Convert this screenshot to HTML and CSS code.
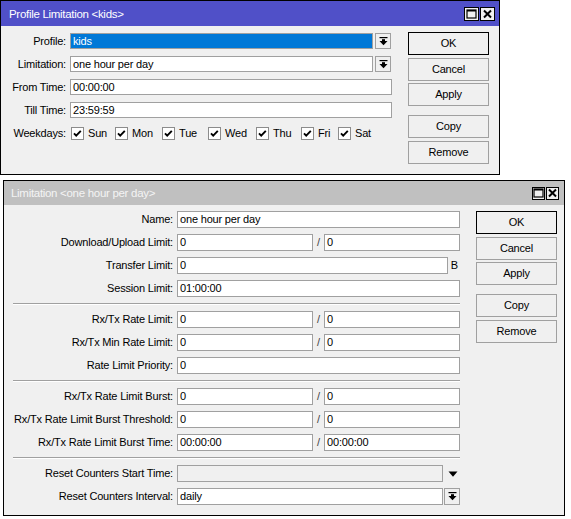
FILE: index.html
```html
<!DOCTYPE html>
<html>
<head>
<meta charset="utf-8">
<link rel="stylesheet" href="styles.css">
</head>
<body>
<div class="win win1">
  <div class="title active">
    <span class="title-text">Profile Limitation &lt;kids&gt;</span>
    <div class="tbtns">
      <span class="tbtn"><svg width="11" height="10" viewBox="0 0 11 10"><rect x="1" y="1" width="9" height="8" fill="none" stroke="#000" stroke-width="1.2"/><rect x="1" y="1" width="9" height="1.5" fill="#000"/></svg></span>
      <span class="tbtn"><svg width="11" height="10" viewBox="0 0 11 10"><path d="M2 1.5L9 8.5M9 1.5L2 8.5" stroke="#000" stroke-width="2"/></svg></span>
    </div>
  </div>
  <div class="body">
    <div class="form form1">
      <div class="lbl">Profile:</div>
      <div class="combo"><div class="field sel">kids</div><span class="dd"><svg width="9" height="9" viewBox="0 0 9 9"><rect x="0.5" y="0" width="8" height="1.2"/><rect x="3" y="2.2" width="3" height="2"/><path d="M0.5 4h8L4.5 8.3z"/></svg></span></div>
      <div class="lbl">Limitation:</div>
      <div class="combo"><div class="field">one hour per day</div><span class="dd"><svg width="9" height="9" viewBox="0 0 9 9"><rect x="0.5" y="0" width="8" height="1.2"/><rect x="3" y="2.2" width="3" height="2"/><path d="M0.5 4h8L4.5 8.3z"/></svg></span></div>
      <div class="lbl">From Time:</div>
      <div class="field">00:00:00</div>
      <div class="lbl">Till Time:</div>
      <div class="field">23:59:59</div>
      <div class="lbl">Weekdays:</div>
      <div class="days">
        <span class="day"><svg class="cb" width="13" height="13" viewBox="0 0 13 13"><rect x="0.5" y="0.5" width="12" height="12" fill="#fff" stroke="#8c8c8c"/><path d="M3 6.3L5.2 8.6L9.8 3.8" fill="none" stroke="#000" stroke-width="1.9"/></svg>Sun</span>
        <span class="day"><svg class="cb" width="13" height="13" viewBox="0 0 13 13"><rect x="0.5" y="0.5" width="12" height="12" fill="#fff" stroke="#8c8c8c"/><path d="M3 6.3L5.2 8.6L9.8 3.8" fill="none" stroke="#000" stroke-width="1.9"/></svg>Mon</span>
        <span class="day"><svg class="cb" width="13" height="13" viewBox="0 0 13 13"><rect x="0.5" y="0.5" width="12" height="12" fill="#fff" stroke="#8c8c8c"/><path d="M3 6.3L5.2 8.6L9.8 3.8" fill="none" stroke="#000" stroke-width="1.9"/></svg>Tue</span>
        <span class="day"><svg class="cb" width="13" height="13" viewBox="0 0 13 13"><rect x="0.5" y="0.5" width="12" height="12" fill="#fff" stroke="#8c8c8c"/><path d="M3 6.3L5.2 8.6L9.8 3.8" fill="none" stroke="#000" stroke-width="1.9"/></svg>Wed</span>
        <span class="day"><svg class="cb" width="13" height="13" viewBox="0 0 13 13"><rect x="0.5" y="0.5" width="12" height="12" fill="#fff" stroke="#8c8c8c"/><path d="M3 6.3L5.2 8.6L9.8 3.8" fill="none" stroke="#000" stroke-width="1.9"/></svg>Thu</span>
        <span class="day"><svg class="cb" width="13" height="13" viewBox="0 0 13 13"><rect x="0.5" y="0.5" width="12" height="12" fill="#fff" stroke="#8c8c8c"/><path d="M3 6.3L5.2 8.6L9.8 3.8" fill="none" stroke="#000" stroke-width="1.9"/></svg>Fri</span>
        <span class="day"><svg class="cb" width="13" height="13" viewBox="0 0 13 13"><rect x="0.5" y="0.5" width="12" height="12" fill="#fff" stroke="#8c8c8c"/><path d="M3 6.3L5.2 8.6L9.8 3.8" fill="none" stroke="#000" stroke-width="1.9"/></svg>Sat</span>
      </div>
    </div>
    <div class="buttons">
      <div class="btn default">OK</div>
      <div class="btn">Cancel</div>
      <div class="btn">Apply</div>
      <div class="btn sep-before">Copy</div>
      <div class="btn">Remove</div>
    </div>
  </div>
</div>

<div class="win win2">
  <div class="title inactive">
    <span class="title-text">Limitation &lt;one hour per day&gt;</span>
    <div class="tbtns">
      <span class="tbtn"><svg width="11" height="10" viewBox="0 0 11 10"><rect x="1" y="1" width="9" height="8" fill="none" stroke="#000" stroke-width="1.2"/><rect x="1" y="1" width="9" height="1.5" fill="#000"/></svg></span>
      <span class="tbtn"><svg width="11" height="10" viewBox="0 0 11 10"><path d="M2 1.5L9 8.5M9 1.5L2 8.5" stroke="#000" stroke-width="2"/></svg></span>
    </div>
  </div>
  <div class="body body2">
    <div class="form form2">
      <div class="lbl">Name:</div>
      <div class="field">one hour per day</div>
      <div class="lbl">Download/Upload Limit:</div>
      <div class="pair"><div class="field">0</div><span class="slash">/</span><div class="field">0</div></div>
      <div class="lbl">Transfer Limit:</div>
      <div class="unitrow"><div class="field">0</div><span class="unit">B</span></div>
      <div class="lbl">Session Limit:</div>
      <div class="field">01:00:00</div>
      <div class="hsep"></div>
      <div class="lbl">Rx/Tx Rate Limit:</div>
      <div class="pair"><div class="field">0</div><span class="slash">/</span><div class="field">0</div></div>
      <div class="lbl">Rx/Tx Min Rate Limit:</div>
      <div class="pair"><div class="field">0</div><span class="slash">/</span><div class="field">0</div></div>
      <div class="lbl">Rate Limit Priority:</div>
      <div class="field">0</div>
      <div class="hsep"></div>
      <div class="lbl">Rx/Tx Rate Limit Burst:</div>
      <div class="pair"><div class="field">0</div><span class="slash">/</span><div class="field">0</div></div>
      <div class="lbl">Rx/Tx Rate Limit Burst Threshold:</div>
      <div class="pair"><div class="field">0</div><span class="slash">/</span><div class="field">0</div></div>
      <div class="lbl">Rx/Tx Rate Limit Burst Time:</div>
      <div class="pair"><div class="field">00:00:00</div><span class="slash">/</span><div class="field">00:00:00</div></div>
      <div class="hsep"></div>
      <div class="lbl">Reset Counters Start Time:</div>
      <div class="combo2"><div class="field disabled"></div><span class="arrow"><svg width="10" height="6" viewBox="0 0 10 6"><path d="M0.5 0.5h9L5 5.8z"/></svg></span></div>
      <div class="lbl">Reset Counters Interval:</div>
      <div class="combo2"><div class="field">daily</div><span class="dd"><svg width="9" height="9" viewBox="0 0 9 9"><rect x="0.5" y="0" width="8" height="1.2"/><rect x="3" y="2.2" width="3" height="2"/><path d="M0.5 4h8L4.5 8.3z"/></svg></span></div>
    </div>
    <div class="buttons">
      <div class="btn default">OK</div>
      <div class="btn">Cancel</div>
      <div class="btn">Apply</div>
      <div class="btn sep-before">Copy</div>
      <div class="btn">Remove</div>
    </div>
  </div>
</div>
</body>
</html>
```

FILE: styles.css
```css
html, body {
  margin: 0;
  padding: 0;
  background: #ffffff;
}
body {
  font-family: "Liberation Sans", Arial, sans-serif;
  font-size: 11px;
  letter-spacing: -0.18px;
  color: #000;
}
.win {
  box-sizing: border-box;
  border: 1px solid #000;
  background: #f0f0f0;
}
.win1 {
  width: 500px;
  height: 175px;
}
.win2 {
  width: 562px;
  margin: 5px 0 0 3px;
}
.title {
  display: flex;
  align-items: center;
  justify-content: space-between;
  color: #fff;
  font-size: 11.5px;
  letter-spacing: -0.3px;
}
.title.active {
  height: 25px;
  background: #5050c8;
  padding: 0 4px 0 8px;
}
.title.inactive {
  height: 24px;
  background: #c0c0c0;
  color: #f4f4f4;
  padding: 0 5px 0 7px;
}
.tbtns {
  display: flex;
  gap: 1px;
}
.tbtn {
  box-sizing: border-box;
  width: 15px;
  height: 14px;
  border: 1px solid #000;
  background: #f0f0f0;
  display: flex;
  align-items: center;
  justify-content: center;
}
.title.inactive .tbtn {
  width: 13px;
  height: 13px;
}
.body {
  display: flex;
  align-items: flex-start;
  gap: 16px;
  padding: 6px 9px 0 7px;
}
.body2 {
  padding: 6px 7px 10px 9px;
}
.form {
  display: grid;
  column-gap: 4px;
  align-items: center;
}
.form1 {
  grid-template-columns: 58px 322px;
  grid-auto-rows: 16px;
  row-gap: 7px;
  margin-top: 1px;
}
.form2 {
  grid-template-columns: 160px 283px;
  grid-auto-rows: auto;
  row-gap: 6px;
}
.lbl {
  text-align: right;
  white-space: nowrap;
  line-height: 16px;
}
.form2 .lbl {
  line-height: 17px;
}
.field {
  box-sizing: border-box;
  height: 16px;
  border: 1px solid #a0a0a0;
  background: #fff;
  padding: 0 2px;
  line-height: 14px;
  white-space: nowrap;
  overflow: hidden;
}
.form2 .field {
  height: 17px;
  line-height: 15px;
}
.field.sel {
  background: #0078d7;
  color: #fff;
}
.field.disabled {
  background: #f0f0f0;
}
.combo {
  display: grid;
  grid-template-columns: 303px 16px;
  column-gap: 2px;
  height: 16px;
}
.combo2 {
  display: grid;
  grid-template-columns: 266px 17px;
  height: 17px;
}
.dd {
  box-sizing: border-box;
  border: 1px solid #a0a0a0;
  background: #f0f0f0;
  display: flex;
  align-items: center;
  justify-content: center;
}
.combo2 .dd {
  margin-left: 1px;
}
.arrow {
  display: flex;
  align-items: center;
  justify-content: center;
  padding-left: 2px;
}
.pair {
  display: grid;
  grid-template-columns: 136px 11px 136px;
  height: 17px;
}
.slash {
  text-align: center;
  color: #444;
  line-height: 17px;
}
.unitrow {
  display: grid;
  grid-template-columns: 271px 12px;
  height: 17px;
}
.unit {
  text-align: right;
  line-height: 17px;
  padding-right: 2px;
}
.hsep {
  grid-column: 1 / -1;
  height: 2px;
  box-sizing: border-box;
  border-top: 1px solid #a0a0a0;
  border-bottom: 1px solid #fff;
}
.days {
  display: grid;
  grid-template-columns: 44px 47px 46px 48px 45px 37px auto;
  margin-left: 1px;
}
.day {
  display: flex;
  align-items: center;
  gap: 4px;
  white-space: nowrap;
}
.cb {
  flex: none;
}
.buttons {
  display: flex;
  flex-direction: column;
  gap: 2.5px;
  width: 81px;
}
.btn {
  box-sizing: border-box;
  height: 23px;
  border: 1px solid #a0a0a0;
  background: #f0f0f0;
  text-align: center;
  line-height: 21px;
}
.btn.default {
  border-color: #000;
}
.btn.sep-before {
  margin-top: 6.5px;
}
```
